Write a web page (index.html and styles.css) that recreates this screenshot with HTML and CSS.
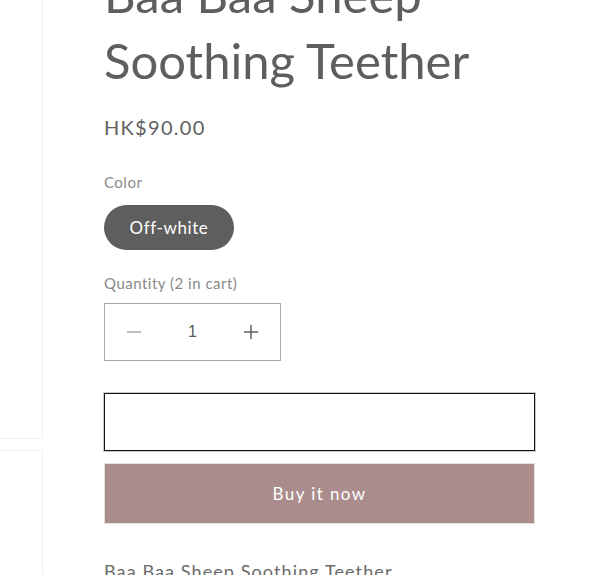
FILE: index.html
```html
<!DOCTYPE html>
<html lang="en">
<head>
<meta charset="utf-8">
<title>Baa Baa Sheep Soothing Teether</title>
<link rel="stylesheet" href="styles.css">
</head>
<body>
<div class="page">
  <div class="gallery">
    <div class="media media-first"></div>
    <div class="media media-second"></div>
  </div>
  <div class="info">
    <h1 class="title">Baa Baa Sheep Soothing Teether</h1>
    <div class="price">HK$90.00</div>
    <div class="variant">
      <div class="label">Color</div>
      <div class="pill">Off-white</div>
    </div>
    <div class="quantity">
      <div class="label">Quantity (2 in cart)</div>
      <div class="qty-box">
        <span class="qty-btn">
          <svg width="14" height="2" viewBox="0 0 14 2"><rect width="14" height="1.4" y="0.3" fill="#a0a0a0"/></svg>
        </span>
        <span class="qty-value">1</span>
        <span class="qty-btn">
          <svg width="14" height="14" viewBox="0 0 14 14"><rect width="14" height="1.4" y="6.3" fill="#555"/><rect width="1.4" height="14" x="6.3" fill="#555"/></svg>
        </span>
      </div>
    </div>
    <div class="buttons">
      <button class="btn-cart" type="button"></button>
      <button class="btn-buy" type="button">Buy it now</button>
    </div>
    <p class="desc">Baa Baa Sheep Soothing Teether</p>
  </div>
</div>
</body>
</html>
```
FILE: styles.css
```css
html, body {
  margin: 0;
  padding: 0;
  background: #ffffff;
  overflow: hidden;
}
body {
  font-family: Lato, "Open Sans", sans-serif;
  color: #5f5f5f;
  height: 575px;
}
.page {
  display: flex;
  align-items: flex-start;
  gap: 61px;
  margin-top: -300px;
}
.gallery {
  width: 43px;
  flex: none;
  display: flex;
  flex-direction: column;
  gap: 11px;
}
.media {
  border: 1px solid #efefef;
  border-left: none;
  box-sizing: border-box;
}
.media-first {
  height: 739px;
}
.media-second {
  height: 500px;
}
.info {
  width: 431px;
  padding-top: 261px;
}
.title {
  margin: 0;
  font-weight: 400;
  font-size: 49px;
  line-height: 66px;
  letter-spacing: 0;
  color: #5e5e5e;
}
.price {
  margin-top: 22px;
  font-size: 20px;
  line-height: 24px;
  letter-spacing: 1.3px;
  color: #606060;
}
.label {
  font-size: 15px;
  line-height: 20px;
  letter-spacing: 0.5px;
  color: #8a8a8a;
}
.variant {
  margin-top: 33px;
}
.pill {
  margin-top: 13px;
  width: 130px;
  height: 45px;
  border-radius: 23px;
  background: #5e5e5e;
  color: #ffffff;
  font-size: 17px;
  letter-spacing: 0.6px;
  display: flex;
  align-items: center;
  justify-content: center;
}
.quantity {
  margin-top: 23px;
}
.qty-box {
  margin-top: 10px;
  width: 177px;
  height: 58px;
  box-sizing: border-box;
  border: 1px solid #a9a9a9;
  display: grid;
  grid-template-columns: 1fr 1fr 1fr;
  align-items: center;
  justify-items: center;
}
.qty-btn {
  display: flex;
  align-items: center;
  justify-content: center;
}
.qty-value {
  font-family: "Liberation Sans", Arial, sans-serif;
  font-size: 16px;
  color: #5a5a5a;
}
.buttons {
  margin-top: 32px;
  display: flex;
  flex-direction: column;
  gap: 12px;
}
.btn-cart {
  display: block;
  width: 431px;
  height: 58px;
  box-sizing: border-box;
  background: #ffffff;
  border: 1px solid #121212;
  box-shadow: 0 0 0 1px #c9c9c9;
  margin: 0;
  padding: 0;
}
.btn-buy {
  display: block;
  width: 431px;
  height: 61px;
  box-sizing: border-box;
  background: #aa8c8c;
  border: 1px solid #e6e0e0;
  color: #ffffff;
  font-family: Lato, "Open Sans", sans-serif;
  font-size: 17px;
  letter-spacing: 1.4px;
  margin: 0;
  padding: 0;
}
.desc {
  margin: 36px 0 0;
  font-size: 18px;
  letter-spacing: 1.1px;
  color: #6a6a6a;
}
```
